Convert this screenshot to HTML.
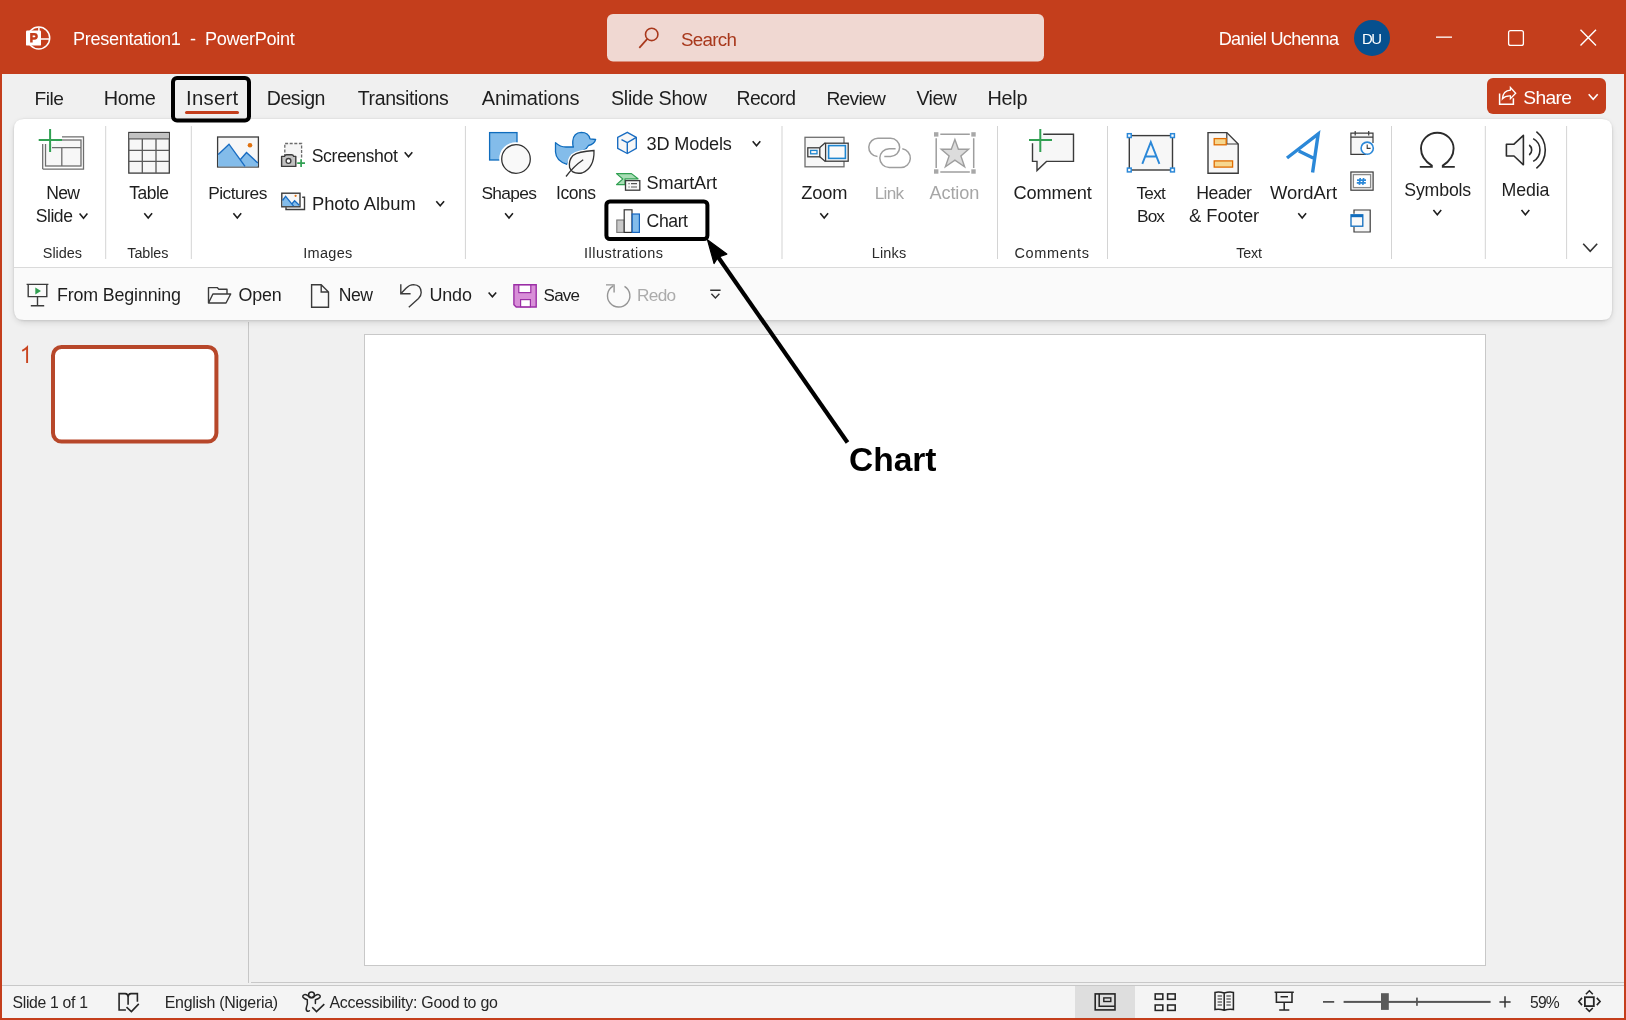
<!DOCTYPE html>
<html><head><meta charset="utf-8"><style>
html,body{margin:0;padding:0;width:1626px;height:1020px;overflow:hidden;background:#F0F0F0}
svg{display:block;position:absolute;left:0;top:0;will-change:transform}
text{font-family:"Liberation Sans",sans-serif;white-space:pre}
</style></head><body>
<svg width="1626" height="1020" viewBox="0 0 1626 1020">
<defs><filter id="blur" x="-5%" y="-5%" width="110%" height="120%"><feGaussianBlur stdDeviation="1.2"/></filter><filter id="blur2" x="-5%" y="-10%" width="110%" height="130%"><feGaussianBlur stdDeviation="3"/></filter></defs>
<rect x="0" y="0" width="1626" height="1020" fill="#C43E1C"/>
<rect x="2" y="74" width="1622" height="944" fill="#F0F0F0"/>
<rect x="2" y="986" width="1622" height="32" fill="#F4F4F4"/>
<rect x="2" y="985" width="1622" height="1" fill="#C8C8C8"/>
<rect x="251" y="982" width="1373" height="1" fill="#C8C8C8"/>
<rect x="248" y="322" width="1" height="661" fill="#C6C6C6"/>
<rect x="364.5" y="334.5" width="1121" height="631" fill="#FFFFFF" stroke="#C8C8C8" stroke-width="1"/>
<rect x="14" y="121" width="1598" height="202" rx="10" fill="#000" opacity="0.10" filter="url(#blur2)"/>
<rect x="14" y="119.5" width="1598" height="201" rx="10" fill="#000" opacity="0.14" filter="url(#blur)"/>
<path d="M14 129 Q14 119 24 119 L1602 119 Q1612 119 1612 129 L1612 267 L14 267 Z" fill="#FFFFFF"/>
<path d="M14 268 L1612 268 L1612 310 Q1612 320 1602 320 L24 320 Q14 320 14 310 Z" fill="#FAFAFA"/>
<rect x="14" y="267" width="1598" height="1" fill="#DADADA"/>
<text x="73.00" y="45.00" font-size="18.13" letter-spacing="-0.324" fill="#FFFFFF" xml:space="preserve">Presentation1  -  PowerPoint</text>
<rect x="607" y="14" width="437" height="47.5" rx="6" fill="#F0D8D2"/>
<circle cx="651.7" cy="34.4" r="6.2" fill="none" stroke="#A8381C" stroke-width="1.6"/>
<path d="M647.3 38.9 L639.3 47.9" stroke="#A8381C" stroke-width="1.7"/>
<text x="681.00" y="46.00" font-size="18.80" letter-spacing="-0.713" fill="#A8381C" >Search</text>
<text x="1218.70" y="45.30" font-size="18.13" letter-spacing="-0.658" fill="#FFFFFF" >Daniel Uchenna</text>
<circle cx="1372" cy="37.9" r="18" fill="#06508F"/>
<text x="1362.00" y="43.90" font-size="14.86" letter-spacing="-1.457" fill="#FFFFFF" >DU</text>
<rect x="1436" y="36.5" width="16" height="1.3" fill="#FFFFFF"/>
<rect x="1508.6" y="30.6" width="14.8" height="14.8" rx="2" fill="none" stroke="#FFFFFF" stroke-width="1.3"/>
<path d="M1580.5 29.8 L1596 45.6 M1596 29.8 L1580.5 45.6" stroke="#FFFFFF" stroke-width="1.4"/>
<text x="34.60" y="105.00" font-size="19.18" letter-spacing="-0.565" fill="#1E1E1E" >File</text>
<text x="103.80" y="105.00" font-size="19.92" letter-spacing="-0.319" fill="#1E1E1E" >Home</text>
<text x="186.10" y="105.00" font-size="20.29" letter-spacing="0.251" fill="#1E1E1E" >Insert</text>
<text x="266.70" y="105.00" font-size="19.58" letter-spacing="-0.428" fill="#1E1E1E" >Design</text>
<text x="357.70" y="105.00" font-size="19.51" letter-spacing="-0.362" fill="#1E1E1E" >Transitions</text>
<text x="481.70" y="105.00" font-size="20.04" letter-spacing="-0.137" fill="#1E1E1E" >Animations</text>
<text x="611.00" y="105.00" font-size="19.74" letter-spacing="-0.300" fill="#1E1E1E" >Slide Show</text>
<text x="736.50" y="105.00" font-size="19.35" letter-spacing="-0.577" fill="#1E1E1E" >Record</text>
<text x="826.40" y="105.00" font-size="19.20" letter-spacing="-0.680" fill="#1E1E1E" >Review</text>
<text x="916.40" y="105.00" font-size="19.57" letter-spacing="-0.501" fill="#1E1E1E" >View</text>
<text x="987.50" y="105.00" font-size="19.89" letter-spacing="-0.270" fill="#1E1E1E" >Help</text>
<rect x="185" y="111" width="54" height="3" rx="1.5" fill="#C43E1C"/>
<rect x="1487" y="78" width="119" height="36" rx="6" fill="#C43E1C"/>
<path d="M1499.6 93.5 V104.3 H1513.4 V98.2" fill="none" stroke="#FFFFFF" stroke-width="1.5"/>
<path d="M1502.4 98.8 Q1503 90.6 1510.4 90.2 V87.5 L1515.7 93.3 L1510.4 98.7 V95.9 Q1505.2 95.6 1502.4 98.8 Z" fill="none" stroke="#FFFFFF" stroke-width="1.3" stroke-linejoin="miter"/>
<text x="1523.30" y="104.10" font-size="19.24" letter-spacing="-0.661" fill="#FFFFFF" >Share</text>
<path d="M1588.70 94.20 L1593.20 99.20 L1597.70 94.20" fill="none" stroke="#FFFFFF" stroke-width="1.6"/>
<circle cx="38.7" cy="38" r="11" fill="none" stroke="#FFF" stroke-width="1.5"/>
<path d="M38.9 27.4 V31 M40.8 38.9 H49.3" stroke="#FFF" stroke-width="1.5"/>
<rect x="26" y="30.4" width="15" height="15.2" rx="1.2" fill="#FFF"/>
<path d="M31.4 42.6 V34.2 H34.4 Q36.6 34.2 36.6 36.3 Q36.6 38.4 34.4 38.4 H31.4" fill="none" stroke="#C43E1C" stroke-width="2.5"/>
<rect x="173" y="78" width="76" height="42.5" rx="4" fill="none" stroke="#000" stroke-width="4"/>
<rect x="105.2" y="126" width="1" height="133" fill="#D4D4D4"/>
<rect x="190.8" y="126" width="1" height="133" fill="#D4D4D4"/>
<rect x="464.9" y="126" width="1" height="133" fill="#D4D4D4"/>
<rect x="781.5" y="126" width="1" height="133" fill="#D4D4D4"/>
<rect x="997.0" y="126" width="1" height="133" fill="#D4D4D4"/>
<rect x="1107.0" y="126" width="1" height="133" fill="#D4D4D4"/>
<rect x="1391.0" y="126" width="1" height="133" fill="#D4D4D4"/>
<rect x="1484.8" y="126" width="1" height="133" fill="#D4D4D4"/>
<rect x="1566.1" y="126" width="1" height="133" fill="#D4D4D4"/>
<path d="M42.7 169.1 V144 M42.7 169.1 H83.5 V136.8 H62" fill="none" stroke="#6E6E6E" stroke-width="1.3"/>
<rect x="45.5" y="140" width="35.5" height="26" fill="#F7F7F7" stroke="#6E6E6E" stroke-width="1.3"/>
<path d="M52 147.6 H81 M61.8 147.6 V166" stroke="#6E6E6E" stroke-width="1.3"/>
<rect x="36" y="136" width="20" height="8" fill="#FFF"/>
<rect x="44" y="128" width="10" height="9" fill="#FFF"/>
<path d="M50.1 129 V152 M38.7 140 H62" stroke="#31A052" stroke-width="2"/>
<text x="46.30" y="198.70" font-size="17.57" letter-spacing="-0.798" fill="#1E1E1E" >New</text>
<text x="35.70" y="222.40" font-size="17.57" letter-spacing="-0.444" fill="#1E1E1E" >Slide</text>
<path d="M79.60 213.60 L83.50 218.20 L87.40 213.60" fill="none" stroke="#1E1E1E" stroke-width="1.6"/>
<text x="42.80" y="258.40" font-size="14.44" letter-spacing="-0.028" fill="#2A2A2A" >Slides</text>
<rect x="128.8" y="132.5" width="40.5" height="40.6" fill="#F7F7F7" stroke="#3B3B3B" stroke-width="1.3"/>
<rect x="129.4" y="133.1" width="39.3" height="5.4" fill="#C2C2C2"/>
<path d="M128.8 138.8 H169.3 M128.8 150.4 H169.3 M128.8 161.4 H169.3 M142.3 138.8 V173 M156 138.8 V173" stroke="#5A5A5A" stroke-width="1.3"/>
<text x="129.30" y="198.70" font-size="17.48" letter-spacing="-0.525" fill="#1E1E1E" >Table</text>
<path d="M144.30 213.30 L148.20 217.90 L152.10 213.30" fill="none" stroke="#1E1E1E" stroke-width="1.6"/>
<text x="127.30" y="258.40" font-size="14.35" letter-spacing="-0.079" fill="#2A2A2A" >Tables</text>
<rect x="217.6" y="137" width="40.8" height="30" fill="#F7F7F7" stroke="#3B3B3B" stroke-width="1.3"/>
<path d="M218.2 154.5 L229 144.2 L240.2 159.8 L246.5 152.5 L257.8 163 V166.4 H218.2 Z" fill="#83BCEA"/>
<path d="M218.2 154.5 L229 144.2 L245 166.4 M240.2 159.8 L246.5 152.5 L257.8 163" fill="none" stroke="#1A6DC2" stroke-width="1.4"/>
<circle cx="250" cy="145.3" r="2.3" fill="#E0710F"/>
<text x="208.20" y="198.70" font-size="17.37" letter-spacing="-0.505" fill="#1E1E1E" >Pictures</text>
<path d="M233.40 213.30 L237.30 217.90 L241.20 213.30" fill="none" stroke="#1E1E1E" stroke-width="1.6"/>
<path d="M284.8 157 V143.5 H301.6 V158.5" fill="#F5F5F5" stroke="#6B6B6B" stroke-width="1.3" stroke-dasharray="3 1.6"/>
<path d="M281.6 166.4 V156.4 H284.6 Q285 154.8 286.6 154.8 H291.6 Q293.2 154.8 293.6 156.4 H295.8 V166.4 Z" fill="#C2C2C2" stroke="#3B3B3B" stroke-width="1.4" stroke-linejoin="round"/>
<circle cx="288.5" cy="160.9" r="2.4" fill="#FFF" stroke="#3B3B3B" stroke-width="1.3"/>
<path d="M301.1 159.2 V167 M297.2 163.1 H305" stroke="#31A052" stroke-width="1.7"/>
<text x="311.70" y="161.70" font-size="17.72" letter-spacing="-0.371" fill="#1E1E1E" >Screenshot</text>
<path d="M404.70 152.20 L408.50 156.80 L412.30 152.20" fill="none" stroke="#1E1E1E" stroke-width="1.6"/>
<path d="M286 207.2 V209.5 H304.5 V197.3 H302.2" fill="none" stroke="#3B3B3B" stroke-width="1.4"/>
<rect x="281.8" y="193.2" width="18.2" height="13.6" fill="#F7F7F7" stroke="#3B3B3B" stroke-width="1.4"/>
<path d="M282.5 200.5 L285.6 196.4 L291.85 204 L294.6 200.8 L299.3 205.2 V206.1 H282.5 Z" fill="#83BCEA"/>
<path d="M282.5 200.5 L285.6 196.4 L293.6 206.1 M292 203.8 L294.6 200.8 L299.3 205.2" fill="none" stroke="#1A6DC2" stroke-width="1.3"/>
<circle cx="295.6" cy="195.8" r="1.1" fill="#E0710F"/>
<text x="312.00" y="209.60" font-size="18.35" letter-spacing="-0.033" fill="#1E1E1E" >Photo Album</text>
<path d="M436.30 201.20 L440.20 205.80 L444.10 201.20" fill="none" stroke="#1E1E1E" stroke-width="1.6"/>
<text x="303.20" y="258.40" font-size="14.49" letter-spacing="0.316" fill="#2A2A2A" >Images</text>
<rect x="489.6" y="132.6" width="27.4" height="27.4" fill="#83BCEA" stroke="#0F6CBD" stroke-width="1.3"/>
<circle cx="516" cy="159" r="16.8" fill="#FFF"/>
<circle cx="516" cy="159" r="14.3" fill="#F9F9F9" stroke="#333" stroke-width="1.3"/>
<text x="481.40" y="198.70" font-size="17.37" letter-spacing="-0.663" fill="#1E1E1E" >Shapes</text>
<path d="M505.10 213.30 L509.00 217.90 L512.90 213.30" fill="none" stroke="#1E1E1E" stroke-width="1.6"/>
<path d="M555.5 142.6 Q560 147 566 147 H573.5 Q572.5 145.5 572.8 141 Q573.5 132.6 581.3 132.3 Q588.5 132.3 590 138.8 L595.6 139.5 Q594.5 144 588.5 145.5 Q587 148.5 584 150 Q580 154 574 156.5 Q569 159.5 567 164.3 Q556 161 555.5 152 Z" fill="#83BCEA" stroke="#0F6CBD" stroke-width="1.3" stroke-linejoin="round"/>
<path d="M594 150.5 Q594.5 168 582 173 Q572 174.5 569.6 167.5 Q568.5 160 573 155.5 Q578 151.5 594 150.5 Z" fill="#FFF" stroke="#FFF" stroke-width="4"/>
<path d="M594 150.5 Q594.5 168 582 173 Q572 174.5 569.6 167.5 Q568.5 160 573 155.5 Q578 151.5 594 150.5 Z" fill="#F9F9F9" stroke="#333" stroke-width="1.3"/>
<path d="M566 176.5 Q574 166 583.2 159.8" fill="none" stroke="#333" stroke-width="1.3"/>
<text x="556.00" y="198.70" font-size="17.55" letter-spacing="-0.487" fill="#1E1E1E" >Icons</text>
<path d="M627.3 132.3 L636.3 137.4 V148.4 L627.3 153.5 L617.7 148.4 V137.4 Z" fill="#F7F7F7" stroke="#1A6DC2" stroke-width="1.4" stroke-linejoin="round"/>
<path d="M627.3 153.5 V142.6 L636.3 137.4 M621.5 139.6 L627.3 142.6" fill="none" stroke="#1A6DC2" stroke-width="1.4"/>
<text x="646.60" y="150.00" font-size="18.13" letter-spacing="-0.160" fill="#1E1E1E" >3D Models</text>
<path d="M752.70 141.30 L756.50 145.70 L760.30 141.30" fill="none" stroke="#1E1E1E" stroke-width="1.6"/>
<path d="M616.5 173.6 H631.5 L638 178.8 H625 V184.6 H616.5 L622.8 179 Z" fill="#A8DDB5" stroke="#31A052" stroke-width="1.2" stroke-linejoin="round"/>
<rect x="625.5" y="180.6" width="14.3" height="9.6" fill="#F7F7F7" stroke="#3B3B3B" stroke-width="1.3"/>
<path d="M628.5 183.6 H629.6 M631 183.6 H637 M628.5 187 H629.6 M631 187 H637" stroke="#555" stroke-width="1.1"/>
<text x="646.60" y="189.00" font-size="18.12" letter-spacing="-0.157" fill="#1E1E1E" >SmartArt</text>
<rect x="616.8" y="220" width="7.4" height="12.4" fill="#C8C8C8" stroke="#777" stroke-width="1.1"/>
<rect x="624.2" y="209.8" width="7.8" height="22.6" fill="#FAFAFA" stroke="#333" stroke-width="1.2"/>
<rect x="632.2" y="214" width="7.2" height="18.4" fill="#83BCEA" stroke="#1565C0" stroke-width="1.2"/>
<text x="646.60" y="227.40" font-size="17.65" letter-spacing="-0.441" fill="#1E1E1E" >Chart</text>
<rect x="606.4" y="201.4" width="101" height="37.6" rx="3.5" fill="none" stroke="#000" stroke-width="4"/>
<text x="584.00" y="258.40" font-size="14.49" letter-spacing="0.475" fill="#2A2A2A" >Illustrations</text>
<rect x="805" y="137.3" width="39" height="29.5" fill="#F7F7F7" stroke="#6E6E6E" stroke-width="1.3"/>
<path d="M819.8 147.6 L825.3 142.8 M819.8 156.8 L825.3 161.4" stroke="#3B3B3B" stroke-width="1.3"/>
<rect x="807.8" y="147.8" width="12" height="9" fill="#F7F7F7" stroke="#3B3B3B" stroke-width="1.3"/>
<rect x="810.6" y="150.4" width="6.4" height="3.4" fill="none" stroke="#1E86D0" stroke-width="1.3"/>
<rect x="825.6" y="143.2" width="22.6" height="18" fill="#FAFAFA" stroke="#3B3B3B" stroke-width="1.3"/>
<rect x="828.6" y="145.6" width="16.8" height="12.8" fill="none" stroke="#1E86D0" stroke-width="1.6"/>
<text x="801.30" y="198.70" font-size="18.24" letter-spacing="-0.140" fill="#1E1E1E" >Zoom</text>
<path d="M820.30 213.30 L824.20 217.90 L828.10 213.30" fill="none" stroke="#1E1E1E" stroke-width="1.6"/>
<path d="M877.5 156.6 A9.05 9.05 0 0 1 878.4 138.3 H890.6 A9.05 9.05 0 0 1 890.6 156.4 H884.3" fill="none" stroke="#9E9E9E" stroke-width="1.5"/>
<path d="M895.6 148.7 H889.2 A9.4 9.4 0 0 0 889.2 167.5 H901 A9.4 9.4 0 0 0 902.3 148.8" fill="none" stroke="#9E9E9E" stroke-width="1.5"/>
<text x="874.70" y="198.70" font-size="17.20" letter-spacing="-0.691" fill="#A6A6A6" >Link</text>
<path d="M940.3 134.3 H969.8 M940.3 171.9 H969.8 M936.2 138.3 V167.9 M973.7 138.3 V167.9" stroke="#9E9E9E" stroke-width="1.5"/>
<rect x="934.0" y="132.20000000000002" width="4.4" height="4.4" fill="#A8A8A8"/>
<rect x="971.3" y="132.20000000000002" width="4.4" height="4.4" fill="#A8A8A8"/>
<rect x="934.0" y="169.3" width="4.4" height="4.4" fill="#A8A8A8"/>
<rect x="971.3" y="169.3" width="4.4" height="4.4" fill="#A8A8A8"/>
<path d="M954.9 139.6 L958.4 149.2 L968.6 149.2 L960.9 156 L964.6 166.8 L954.9 160.1 L945.4 166.8 L949.1 156 L941.2 149.2 L951.3 149.2 Z" fill="#DCDCDC" stroke="#9E9E9E" stroke-width="1.4" stroke-linejoin="miter"/>
<text x="929.60" y="198.70" font-size="18.14" letter-spacing="-0.144" fill="#A6A6A6" >Action</text>
<text x="871.70" y="258.40" font-size="14.49" letter-spacing="0.193" fill="#2A2A2A" >Links</text>
<path d="M1043.2 134.2 H1073.5 V161.4 H1046.5 L1037 170.5 V161.4 H1032.5 V143.2" fill="#F7F7F7" stroke="#3B3B3B" stroke-width="1.4" stroke-linejoin="miter"/>
<path d="M1040.3 129 V152 M1029 140 H1052" stroke="#31A052" stroke-width="2"/>
<text x="1013.50" y="198.70" font-size="18.23" letter-spacing="-0.124" fill="#1E1E1E" >Comment</text>
<text x="1014.50" y="258.40" font-size="14.49" letter-spacing="0.633" fill="#2A2A2A" >Comments</text>
<rect x="1129.3" y="135.6" width="43.2" height="34.4" fill="#F7F7F7" stroke="#3B3B3B" stroke-width="1.4"/>
<rect x="1127.3999999999999" y="133.7" width="3.8" height="3.8" fill="#FFF" stroke="#2B88D8" stroke-width="1.5"/>
<rect x="1170.6" y="133.7" width="3.8" height="3.8" fill="#FFF" stroke="#2B88D8" stroke-width="1.5"/>
<rect x="1127.3999999999999" y="168.1" width="3.8" height="3.8" fill="#FFF" stroke="#2B88D8" stroke-width="1.5"/>
<rect x="1170.6" y="168.1" width="3.8" height="3.8" fill="#FFF" stroke="#2B88D8" stroke-width="1.5"/>
<path d="M1142.3 163.8 L1150.8 142.2 L1159.4 163.8 M1145 156.5 H1156.6" fill="none" stroke="#2B88D8" stroke-width="1.9"/>
<text x="1136.40" y="198.70" font-size="17.21" letter-spacing="-0.685" fill="#1E1E1E" >Text</text>
<text x="1137.00" y="222.40" font-size="17.29" letter-spacing="-0.899" fill="#1E1E1E" >Box</text>
<path d="M1208 132.6 H1226.8 L1238.2 144 V173.2 H1208 Z" fill="#F7F7F7" stroke="#3B3B3B" stroke-width="1.4" stroke-linejoin="miter"/>
<path d="M1226.8 132.6 V144 H1238.2" fill="none" stroke="#3B3B3B" stroke-width="1.2"/>
<rect x="1214.2" y="138.6" width="12" height="6.2" fill="#F6D78F" stroke="#E06C00" stroke-width="1.3"/>
<rect x="1214.2" y="160.9" width="18.4" height="6.2" fill="#F6D78F" stroke="#E06C00" stroke-width="1.3"/>
<text x="1196.20" y="198.70" font-size="17.70" letter-spacing="-0.448" fill="#1E1E1E" >Header</text>
<text x="1188.90" y="222.40" font-size="18.38" letter-spacing="-0.013" fill="#1E1E1E" >&amp; Footer</text>
<path d="M1287 158 L1318.2 133.8 L1312.6 172.6 M1298.8 151 L1313.2 158" fill="none" stroke="#2B88D8" stroke-width="3.4" stroke-linejoin="miter"/>
<text x="1269.90" y="198.70" font-size="18.41" letter-spacing="0.006" fill="#1E1E1E" >WordArt</text>
<path d="M1298.30 213.30 L1302.20 217.90 L1306.10 213.30" fill="none" stroke="#1E1E1E" stroke-width="1.6"/>
<text x="1236.30" y="258.40" font-size="14.25" letter-spacing="-0.145" fill="#2A2A2A" >Text</text>
<path d="M1366 154.4 H1350.9 V133.2 H1373 V143" fill="#F7F7F7" stroke="#3B3B3B" stroke-width="1.2"/>
<path d="M1350.9 137.2 H1373 M1355.2 131 V135.6 M1368.7 131 V135.6" stroke="#3B3B3B" stroke-width="1.2"/>
<circle cx="1367.2" cy="148.2" r="6.1" fill="#FFF" stroke="#2B88D8" stroke-width="1.6"/>
<path d="M1367.2 144.6 V148.4 H1370.6" fill="none" stroke="#3B3B3B" stroke-width="1.1"/>
<rect x="1350.9" y="172" width="22.2" height="18.2" fill="#F7F7F7" stroke="#3B3B3B" stroke-width="1.2"/>
<rect x="1353.4" y="174.6" width="17.2" height="13" fill="#FFF" stroke="#8A8A8A" stroke-width="1.3"/>
<path d="M1360.2 178 L1359.4 184.8 M1363.6 178 L1362.8 184.8 M1357 180.2 H1366 M1356.8 182.8 H1365.8" stroke="#2B88D8" stroke-width="1.7"/>
<path d="M1354 213.8 V210 H1370.2 V232 H1354 V227" fill="#F7F7F7" stroke="#3B3B3B" stroke-width="1.2"/>
<rect x="1351" y="214.8" width="11.8" height="11.4" fill="#FAFAFA" stroke="#0F6CBD" stroke-width="1.3"/>
<rect x="1351" y="214.8" width="11.8" height="2.4" fill="#0F6CBD"/>
<path d="M1419.8 166.9 H1431.8 V165.6 Q1421 159 1421 148.6 A16.3 15.8 0 0 1 1453.6 148.6 Q1453.6 159 1442.8 165.6 V166.9 H1454.8" fill="none" stroke="#2B2B2B" stroke-width="1.9"/>
<text x="1404.30" y="195.80" font-size="17.71" letter-spacing="-0.167" fill="#1E1E1E" >Symbols</text>
<path d="M1433.40 210.10 L1437.30 214.70 L1441.20 210.10" fill="none" stroke="#1E1E1E" stroke-width="1.6"/>
<path d="M1506.4 144.2 H1514 L1523.4 135.4 V164.8 L1514 156 H1506.4 Z" fill="#F7F7F7" stroke="#2B2B2B" stroke-width="1.6" stroke-linejoin="round"/>
<path d="M1529.2 145 A6.25 6.25 0 0 1 1529.2 155 M1533.2 138.6 A13 13 0 0 1 1533.2 161.4 M1536.4 131.6 A23.5 23.5 0 0 1 1536.4 168.4" fill="none" stroke="#2B2B2B" stroke-width="1.6"/>
<text x="1501.60" y="195.80" font-size="17.75" letter-spacing="-0.145" fill="#1E1E1E" >Media</text>
<path d="M1521.50 210.10 L1525.40 214.70 L1529.30 210.10" fill="none" stroke="#1E1E1E" stroke-width="1.6"/>
<path d="M1583.20 243.70 L1590.20 251.30 L1597.20 243.70" fill="none" stroke="#333" stroke-width="1.6"/>
<path d="M26.6 284.4 H48.4 M28.2 284.4 V296.6 H46.8 V284.4 M37.5 296.6 V305.7 M30.8 305.7 H44.2" fill="none" stroke="#3B3B3B" stroke-width="1.4"/>
<path d="M35.3 287.6 L41 291 L35.3 294.4 Z" fill="#31A052"/>
<text x="57.00" y="300.80" font-size="17.84" letter-spacing="-0.148" fill="#1E1E1E" >From Beginning</text>
<path d="M208.5 303 V287.6 H217.2 L218.8 289.2 H227 V293.6 M208.5 303 L212.9 294 H230.7 L226 303 Z" fill="none" stroke="#3B3B3B" stroke-width="1.4" stroke-linejoin="round"/>
<text x="238.60" y="300.80" font-size="17.85" letter-spacing="-0.217" fill="#1E1E1E" >Open</text>
<path d="M311.6 284.8 H321.2 L328.5 292 V307.2 H311.6 Z M321.2 284.8 V292 H328.5" fill="none" stroke="#3B3B3B" stroke-width="1.4" stroke-linejoin="miter"/>
<text x="338.70" y="300.80" font-size="17.61" letter-spacing="-0.490" fill="#1E1E1E" >New</text>
<path d="M400.8 284.2 V293.8 H410.6 M400.8 293.8 L406 288.2 Q409.5 284.6 413.5 284.6 Q421.2 285 421.2 292.5 Q421.2 296 418.5 298.6 L408.8 307.2" fill="none" stroke="#3B3B3B" stroke-width="1.4"/>
<text x="429.40" y="300.80" font-size="17.94" letter-spacing="-0.135" fill="#1E1E1E" >Undo</text>
<path d="M488.60 292.50 L492.40 296.70 L496.20 292.50" fill="none" stroke="#1E1E1E" stroke-width="1.6"/>
<path d="M513.9 284.8 H536.2 V307 H516.2 L513.9 304.7 Z" fill="#D88FD8" stroke="#9B2FA6" stroke-width="1.4"/>
<rect x="518.8" y="285" width="12" height="7.6" fill="#FFF" stroke="#9B2FA6" stroke-width="1.2"/>
<rect x="520.6" y="299.6" width="9.8" height="7.2" fill="#FFF" stroke="#9B2FA6" stroke-width="1.2"/>
<text x="543.60" y="300.80" font-size="17.03" letter-spacing="-0.773" fill="#1E1E1E" >Save</text>
<path d="M624.5 286.3 A11.2 11.2 0 1 1 613 286.2 M606 284.9 H614.1 V292.5" fill="none" stroke="#959595" stroke-width="1.4"/>
<text x="637.00" y="300.80" font-size="17.23" letter-spacing="-0.669" fill="#ABABAB" >Redo</text>
<path d="M710.2 290.2 H720.6 M711.4 293.8 L715.4 298 L719.4 293.8" fill="none" stroke="#333" stroke-width="1.4"/>
<rect x="53" y="347" width="163.4" height="94.6" rx="8.5" fill="#FFF" stroke="#B7472A" stroke-width="4"/>
<path d="M27.1 362.9 V347.4 Q25 349.6 22.2 350.8" fill="none" stroke="#C9441F" stroke-width="1.9"/>
<path d="M847.5 442.5 L716 254" stroke="#000" stroke-width="4.2" stroke-linecap="butt"/>
<path d="M707.4 239.7 L726.8 254.1 L718 257.2 L714.1 263.5 Z" fill="#000" stroke="#000" stroke-width="1.2" stroke-linejoin="round"/>
<text x="849.10" y="470.60" font-size="33.53" letter-spacing="-0.061" fill="#000" font-weight="bold" >Chart</text>
<text x="12.50" y="1007.90" font-size="15.79" letter-spacing="-0.318" fill="#262626" >Slide 1 of 1</text>
<path d="M125.9 1010 H119.1 V993.6 H125.2 Q128.1 993.8 128.1 997 V1004.7 M128.1 997 Q128.1 993.8 131 993.6 H137.4 V1001.7" fill="none" stroke="#262626" stroke-width="1.6"/>
<path d="M126.5 1007.2 L131.4 1011.6 L138.8 1003.9" fill="none" stroke="#262626" stroke-width="1.6"/>
<text x="164.70" y="1007.90" font-size="15.93" letter-spacing="-0.265" fill="#262626" >English (Nigeria)</text>
<circle cx="311.5" cy="994.9" r="2.9" fill="none" stroke="#262626" stroke-width="1.5"/>
<path d="M307.3 999.8 Q304.5 999 303.2 997.6 Q302 995.6 304.4 994.6 Q305.6 994.2 307.4 995.4 Q309.5 997 311.5 997.6 Q313.5 997 315.6 995.4 Q317.4 994.2 318.6 994.6 Q321 995.6 319.8 997.6 Q318.5 999 315.4 999.8 V1003.6 M307.3 999.8 Q307.8 1004 306.5 1007 Q305.5 1010.5 307.4 1011.2 Q308.6 1011.6 309.4 1010.8" fill="none" stroke="#262626" stroke-width="1.5" stroke-linejoin="round" stroke-linecap="round"/>
<path d="M312.2 1007.2 L316.5 1011.6 L324.3 1004.2" fill="none" stroke="#262626" stroke-width="1.6"/>
<text x="329.40" y="1007.90" font-size="15.95" letter-spacing="-0.252" fill="#262626" >Accessibility: Good to go</text>
<rect x="1075" y="986" width="60" height="32" fill="#DEDEDE"/>
<rect x="1095.2" y="993.9" width="19.8" height="16" fill="none" stroke="#262626" stroke-width="1.6"/>
<path d="M1099.2 993.9 V1006.3 H1115" fill="none" stroke="#262626" stroke-width="1.55"/>
<rect x="1103.8" y="997.9" width="7" height="3.6" fill="none" stroke="#262626" stroke-width="1.4"/>
<rect x="1155.2" y="993.9" width="7.6" height="5.4" fill="none" stroke="#262626" stroke-width="1.55"/>
<rect x="1167.6" y="993.9" width="7.6" height="5.4" fill="none" stroke="#262626" stroke-width="1.55"/>
<rect x="1155.2" y="1005" width="7.6" height="5.4" fill="none" stroke="#262626" stroke-width="1.55"/>
<rect x="1167.6" y="1005" width="7.6" height="5.4" fill="none" stroke="#262626" stroke-width="1.55"/>
<path d="M1224.2 1010.2 Q1219 1008.6 1215 1009.6 V992.4 Q1219 991.4 1224.2 993 Q1229.4 991.4 1233.4 992.4 V1009.6 Q1229.4 1008.6 1224.2 1010.2 Z M1224.2 993 V1010" fill="none" stroke="#262626" stroke-width="1.55"/>
<path d="M1217.6 996 H1222 M1217.6 999 H1222 M1217.6 1002 H1222 M1217.6 1005 H1222 M1226.4 996 H1230.8 M1226.4 999 H1230.8 M1226.4 1002 H1230.8 M1226.4 1005 H1230.8" stroke="#262626" stroke-width="1.2"/>
<path d="M1274.6 992.3 H1293.8 M1276.4 992.3 V1002.2 H1292 V992.3 M1284.2 1002.2 V1010 M1279.2 1010 H1289.3 M1280.5 996.8 H1288" fill="none" stroke="#262626" stroke-width="1.55"/>
<path d="M1323 1001.9 H1334.2" stroke="#333" stroke-width="1.5"/>
<rect x="1343.6" y="1000.9" width="147" height="2" fill="#555"/>
<rect x="1416.1" y="997.6" width="1.7" height="8.2" fill="#555"/>
<rect x="1381" y="993.2" width="7.8" height="16.7" fill="#5A5A5A"/>
<path d="M1499.4 1001.9 H1510.6 M1505 996.2 V1007.6" stroke="#333" stroke-width="1.5"/>
<text x="1530.00" y="1007.90" font-size="15.66" letter-spacing="-0.817" fill="#262626" >59%</text>
<rect x="1584.9" y="997.2" width="8.9" height="8.9" fill="none" stroke="#262626" stroke-width="1.8"/>
<path d="M1585.9 994.2 L1589.35 990.8 L1592.8 994.2 M1585.9 1008 L1589.35 1011.3 L1592.8 1008 M1582 997.9 L1578.8 1001.5 L1582 1005.1 M1596.8 997.9 L1600.1 1001.5 L1596.8 1005.1" fill="none" stroke="#262626" stroke-width="1.6"/>
</svg></body></html>
